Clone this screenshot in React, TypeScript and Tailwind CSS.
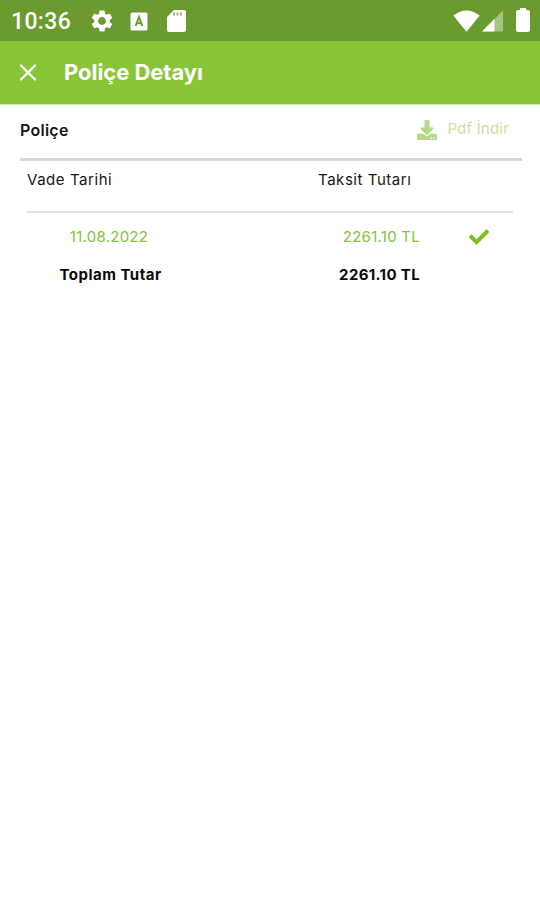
import React from "react";
import { FaCheck, FaDownload } from "react-icons/fa";
import { MdSettings } from "react-icons/md";

function StatusBar() {
  return (
    <div className="flex h-[41px] items-center bg-[#6b9b2e] text-white">
      <span className="ml-[11px] w-[61px] pt-[3px] whitespace-nowrap font-[Roboto] text-[23px] leading-6 font-medium tracking-[0.35px]">10:36</span>
      <MdSettings className="mt-px ml-[17px] size-[26px]" />
      <svg className="mt-px ml-[15px] h-[19px] w-[18px]" viewBox="0 0 18 19">
        <rect x="0.5" y="0.5" width="17" height="18" rx="1.5" fill="white" />
        <path d="M5.6 14 9 5l3.4 9M6.8 11.2h4.4" fill="none" stroke="#6b9b2e" strokeWidth="2" />
      </svg>
      <svg className="mt-px ml-[19px] h-[22px] w-[19px]" viewBox="0 0 19 22">
        <path d="M7 0h10q2 0 2 2v18q0 2-2 2H2q-2 0-2-2V7z" fill="white" />
        <path d="M7 2.5v3M10.5 2.5v3M14 2.5v3" stroke="#9bbd70" strokeWidth="2" />
      </svg>
      <svg className="ml-auto h-[22px] w-[27px]" viewBox="0 0 27 22">
        <path d="M0.3 5.6Q13.5-4.8 26.7 5.6L13.5 21.8z" fill="white" />
      </svg>
      <svg className="ml-[2px] h-[22px] w-[21px]" viewBox="0 0 22 22">
        <path d="M22 0v22H0z" fill="#a5c381" />
        <path d="M13 9v13H0z" fill="white" />
      </svg>
      <svg className="mr-[10px] mb-px ml-[13px] h-[24px] w-[14px]" viewBox="0 0 14 24">
        <path d="M4 0h6v2h2q2 0 2 2v18q0 2-2 2H2q-2 0-2-2V4q0-2 2-2h2z" fill="white" />
      </svg>
    </div>
  );
}

function Header() {
  return (
    <header className="flex h-16 items-center border-b border-[#cde8ab] bg-[#88c637] text-white">
      <svg className="ml-[20px] h-[17px] w-[16px]" viewBox="0 0 16 17">
        <path d="m1 1.5 14 14M15 1.5l-14 14" stroke="white" strokeWidth="2.3" strokeLinecap="round" />
      </svg>
      <h1 className="ml-[28px] pb-px text-[22px] leading-6 font-bold tracking-[-0.05px]">Poliçe Detayı</h1>
    </header>
  );
}

export default function App() {
  return (
    <div className="flex h-[900px] w-[540px] flex-col bg-white font-[Inter,sans-serif] text-[15px] whitespace-nowrap text-[#171717]">
      <StatusBar />
      <Header />
      <main className="pr-[18px] pl-[20px]">
        <div className="flex h-[56px] items-center justify-between border-b-3 border-[#d9d9d9] pb-[4px]">
          <h2 className="text-[16px] leading-6 font-semibold tracking-[0.25px]">Poliçe</h2>
          <button className="flex items-center text-[15px] tracking-[0.2px] text-[#c7e3a2]">
            <FaDownload className="size-[20px] text-[#b5d889]" />
            <span className="mr-[13px] ml-[10px]">Pdf İndir</span>
          </button>
        </div>
        <section className="mr-[9px] ml-[7px]">
          <div className="flex h-[52px] border-b-2 border-[#e0e0e0] pt-[7px] leading-6 tracking-[0.55px]">
            <span className="w-[291px]">Vade Tarihi</span>
            <span>Taksit Tutarı</span>
          </div>
          <div className="flex h-[38px] items-center pt-[10px] leading-6 tracking-[0.25px] text-[#85c23d]">
            <span className="w-[164px] text-center">11.08.2022</span>
            <span className="w-[229px] text-right">2261.10 TL</span>
            <FaCheck className="ml-[49px] size-[20px] text-[#80bd20]" />
          </div>
          <div className="flex h-[38px] items-center pt-[10px] leading-6 font-bold tracking-[0.35px] text-[#080808]">
            <span className="w-[167px] text-center tracking-[0.5px]">Toplam Tutar</span>
            <span className="w-[226px] text-right">2261.10 TL</span>
          </div>
        </section>
      </main>
    </div>
  );
}
